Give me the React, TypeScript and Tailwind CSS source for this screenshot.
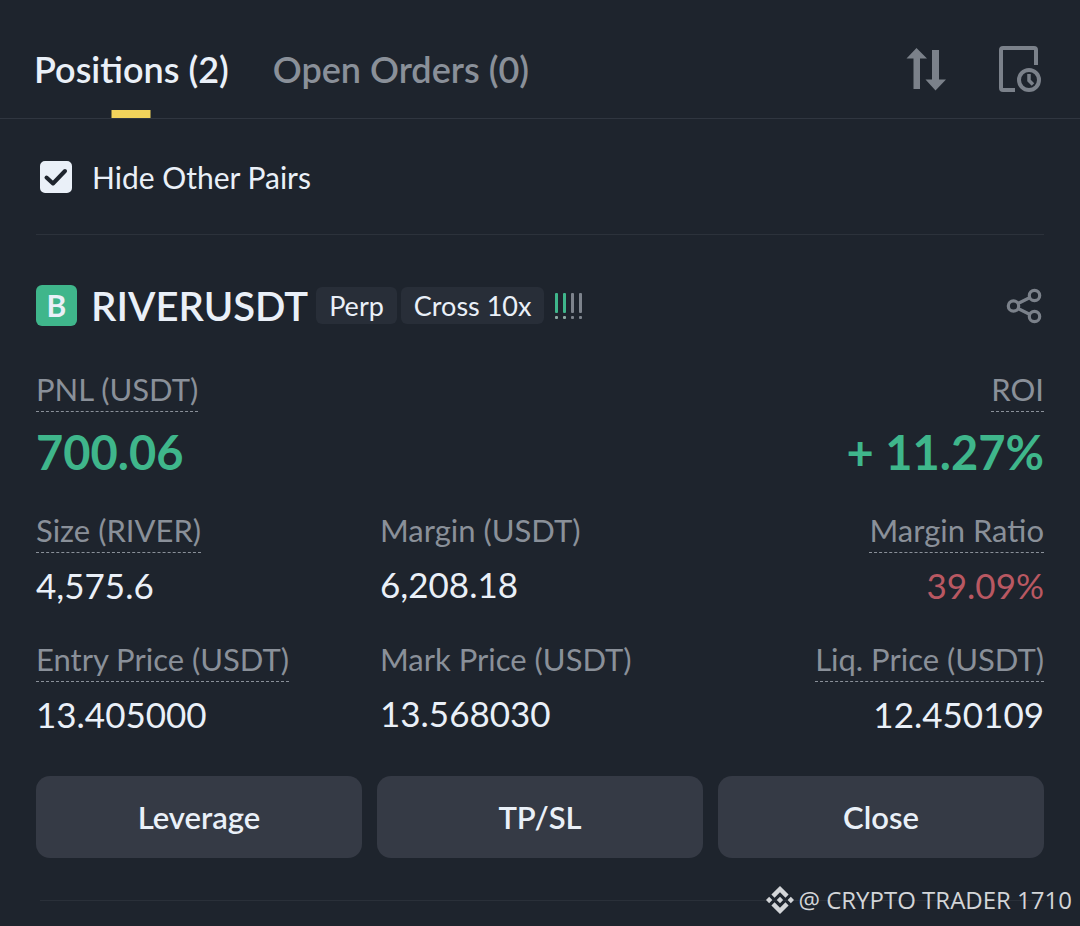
import React, { useState } from "react";

type Stat = {
  label: string;
  value: string;
  hint?: boolean;
  align?: "left" | "right";
  tone?: "default" | "danger";
};

const STATS: Stat[] = [
  { label: "Size (RIVER)", value: "4,575.6", hint: true },
  { label: "Margin (USDT)", value: "6,208.18" },
  { label: "Margin Ratio", value: "39.09%", hint: true, align: "right", tone: "danger" },
  { label: "Entry Price (USDT)", value: "13.405000", hint: true },
  { label: "Mark Price (USDT)", value: "13.568030" },
  { label: "Liq. Price (USDT)", value: "12.450109", hint: true, align: "right" },
];

const ACTIONS = ["Leverage", "TP/SL", "Close"];

function SortIcon() {
  return (
    <svg viewBox="0 0 40 44" className="h-11 w-10" fill="currentColor" aria-hidden="true">
      <path d="M10.500 1 21 11.500h-7V42H7.500V11.500H0.500Z" />
      <path d="M29.500 43.500 19.500 32.500H26V3h7v29.500h7Z" />
    </svg>
  );
}

function HistoryIcon() {
  return (
    <svg viewBox="0 0 44 48" className="h-12 w-11" fill="none" stroke="currentColor" strokeWidth="4" aria-hidden="true">
      <path d="M17 45H5a2 2 0 0 1-2-2V5a2 2 0 0 1 2-2h31a2 2 0 0 1 2 2v15" />
      <circle cx="31" cy="35" r="10" />
      <path d="M31 29v6.5l4 4" strokeWidth="3.5" />
    </svg>
  );
}

function ShareIcon() {
  return (
    <svg viewBox="0 0 36 36" className="size-9" fill="none" stroke="currentColor" strokeWidth="3.2" aria-hidden="true">
      <circle cx="7.5" cy="18" r="5.2" />
      <circle cx="28.5" cy="7.5" r="5.2" />
      <circle cx="28.5" cy="28.5" r="5.2" />
      <path d="m12 15.5 12-6M12 20.5l12 6" />
    </svg>
  );
}

// two lit bars out of four
function RiskMeter() {
  return (
    <svg viewBox="0 0 30 28" className="h-7 w-[30px]" aria-label="2 / 4">
      {[0, 1, 2, 3].map((i) => (
        <g key={i} fill={i < 2 ? "#3fb68b" : "#7d838c"}>
          <rect x={1 + i * 8} y="1" width="3" height="20" rx="1" />
          <rect x={1 + i * 8} y="24" width="3" height="3" rx="1" fill={i < 2 ? "#8fa9a3" : "#7d838c"} />
        </g>
      ))}
    </svg>
  );
}

function DiamondLogo() {
  return (
    <svg viewBox="0 0 126.6 126.6" className="size-7" fill="currentColor" aria-hidden="true">
      <path d="m38.7 53.2 24.6-24.6 24.6 24.6 14.3-14.3L63.3 0 24.4 38.9Z" />
      <path d="m0 63.3 14.3-14.3 14.3 14.3-14.3 14.3Z" />
      <path d="m38.7 73.4 24.6 24.6 24.6-24.6 14.3 14.3-38.9 38.9-38.9-38.9Z" />
      <path d="m98 63.3 14.3-14.3 14.3 14.3-14.3 14.3Z" />
      <path d="M63.3 48.8 77.8 63.3 63.3 77.8 48.8 63.3Z" />
    </svg>
  );
}

function Label({ text, hint }: { text: string; hint?: boolean }) {
  return (
    <span
      className={`inline-block pb-1 text-[31px] leading-9 text-[#8a9099] ${
        hint ? "border-b border-dashed border-[#8a9099]" : ""
      }`}
    >
      {text}
    </span>
  );
}

function StatCell({ stat }: { stat: Stat }) {
  return (
    <div className={stat.align === "right" ? "text-right" : ""}>
      <dt>
        <Label text={stat.label} hint={stat.hint} />
      </dt>
      <dd
        className={`mt-2 text-[35px] leading-[48px] ${stat.tone === "danger" ? "text-[#b95862]" : "text-[#eaf0f8]"}`}
      >
        {stat.value}
      </dd>
    </div>
  );
}

export default function App() {
  const [tab, setTab] = useState(0);
  const [hideOthers, setHideOthers] = useState(true);

  return (
    <main className="min-h-screen bg-[#1e242d] font-['Lato',sans-serif] text-[#eaf0f8]">
      <header className="flex h-[119px] items-stretch justify-between border-b border-[#303640] pr-[38px] pl-[34px]">
        <nav className="flex gap-11">
          {["Positions (2)", "Open Orders (0)"].map((name, i) => (
            <button
              key={name}
              type="button"
              onClick={() => setTab(i)}
              className={`relative pt-5 text-[36px] font-semibold ${tab === i ? "text-[#eaf0f8]" : "text-[#8a9099]"}`}
            >
              {name}
              {tab === i && <span className="absolute bottom-0 left-1/2 h-2 w-[39px] -translate-x-1/2 bg-[#f2d35b]" />}
            </button>
          ))}
        </nav>
        <div className="flex items-center gap-[52px] pt-5 text-[#7b818a]">
          <button type="button" aria-label="Sort">
            <SortIcon />
          </button>
          <button type="button" aria-label="Order history">
            <HistoryIcon />
          </button>
        </div>
      </header>

      <div className="px-9">
        <div className="flex h-[116px] items-center border-b border-[#2c323b] pl-1">
          <label className="flex items-center gap-5 text-[30px] leading-10">
            <span className="relative inline-flex">
              <input
                type="checkbox"
                checked={hideOthers}
                onChange={(e) => setHideOthers(e.target.checked)}
                className="size-8 appearance-none rounded-[5px] border-2 border-[#eaf0f8] checked:bg-[#eaf0f8]"
              />
              {hideOthers && (
                <svg
                  viewBox="0 0 32 32"
                  className="pointer-events-none absolute inset-0 size-8"
                  fill="none"
                  stroke="#1e242d"
                  strokeWidth="4"
                  strokeLinecap="round"
                  strokeLinejoin="round"
                  aria-hidden="true"
                >
                  <path d="m6.500 16.500 6.500 6 12-12.500" />
                </svg>
              )}
            </span>
            Hide Other Pairs
          </label>
        </div>

        <section className="pt-[50px]">
          <div className="flex items-center justify-between">
            <div className="flex items-center">
              <span className="flex size-[41px] items-center justify-center rounded-md bg-[#3fb68b] text-[30px] font-bold">
                B
              </span>
              <h2 className="ml-[14px] text-[40px] leading-10 font-semibold">RIVERUSDT</h2>
              <span className="ml-2 rounded-md bg-[#282e38] px-[13px] text-[27px] leading-[37px]">Perp</span>
              <span className="ml-1 rounded-md bg-[#282e38] px-[13px] text-[27px] leading-[37px]">Cross 10x</span>
              <span className="ml-[10px]">
                <RiskMeter />
              </span>
            </div>
            <button type="button" aria-label="Share" className="mr-0.5 text-[#7b818a]">
              <ShareIcon />
            </button>
          </div>

          <dl className="mt-[45px] flex justify-between">
            <div>
              <dt>
                <Label text="PNL (USDT)" hint />
              </dt>
              <dd className="mt-2 text-[47px] leading-[64px] font-bold text-[#3fb68b]">700.06</dd>
            </div>
            <div className="text-right">
              <dt>
                <Label text="ROI" hint />
              </dt>
              <dd className="mt-2 text-[47px] leading-[64px] font-bold text-[#3fb68b]">+ 11.27%</dd>
            </div>
          </dl>

          <dl className="mt-7 grid grid-cols-[344fr_332fr_332fr] gap-y-8">
            {STATS.map((stat) => (
              <StatCell key={stat.label} stat={stat} />
            ))}
          </dl>

          <div className="mt-[38px] grid grid-cols-3 gap-[15px]">
            {ACTIONS.map((name) => (
              <button key={name} type="button" className="h-[82px] rounded-[14px] bg-[#353a45] text-[31px] font-semibold">
                {name}
              </button>
            ))}
          </div>
        </section>
      </div>

      <footer className="relative mt-[22px] flex h-10 items-center justify-end pr-2">
        <span className="absolute top-5 right-9 left-10 h-px bg-[#2a3039]" />
        <span className="relative flex items-center gap-1 font-['Open_Sans',sans-serif] text-[24px] text-[#d3d5d8]">
          <DiamondLogo />@ CRYPTO TRADER 1710
        </span>
      </footer>
    </main>
  );
}
